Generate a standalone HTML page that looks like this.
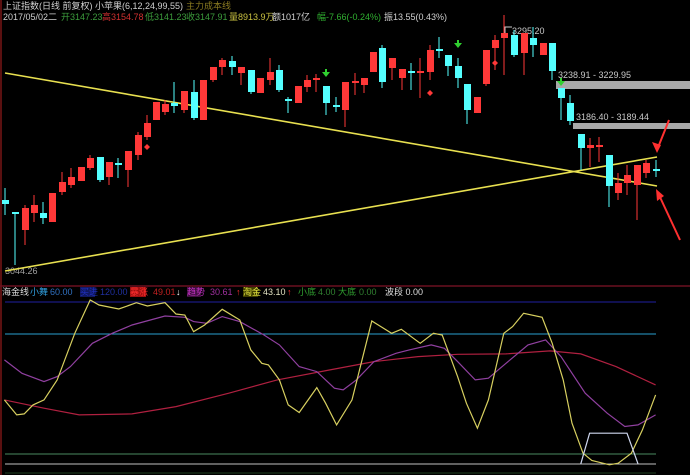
<!DOCTYPE html>
<html><head><meta charset="utf-8"><style>
html,body{margin:0;padding:0;background:#000;width:690px;height:475px;overflow:hidden}
svg{display:block}
text{font-family:"Liberation Sans","Noto Sans CJK SC",sans-serif;font-size:9px}
</style></head><body>
<svg id="s" width="690" height="475" viewBox="0 0 690 475" xmlns="http://www.w3.org/2000/svg">
<rect width="690" height="475" fill="#000"/>
<rect x="0" y="0" width="2" height="475" fill="#5a1010"/>
<line x1="0" y1="286" x2="690" y2="286" stroke="#6a1020" stroke-width="1.5"/>
<text x="3" y="9" fill="#d0d0d0">上证指数(日线 前复权) 小苹果(6,12,24,99,55)</text>
<text x="186" y="9" fill="#8a7a20">主力成本线</text>
<text x="3" y="20" fill="#d0d0d0">2017/05/02二</text>
<text x="61" y="20" fill="#3c9c3c">开3147.23</text>
<text x="102" y="20" fill="#d03030">高3154.78</text>
<text x="145" y="20" fill="#3c9c3c">低3141.23</text>
<text x="186" y="20" fill="#3c9c3c">收3147.91</text>
<text x="229" y="20" fill="#c8c040">量8913.9万</text>
<text x="272" y="20" fill="#d0d0d0">额1017亿</text>
<text x="317" y="20" fill="#30b030">幅-7.66(-0.24%)</text>
<text x="384" y="20" fill="#d0d0d0">振13.55(0.43%)</text>
<rect x="556" y="81" width="134" height="8" fill="#a8a8a8"/>
<rect x="573" y="123" width="117" height="6" fill="#a8a8a8"/>
<text x="558" y="78" fill="#c8c8c8">3238.91 - 3229.95</text>
<text x="576" y="120" fill="#c8c8c8">3186.40 - 3189.44</text>
<path d="M505 33 V27 H512" stroke="#ccc" fill="none"/>
<text x="512" y="34" fill="#c8c8c8">3295.20</text>
<text x="5" y="274" fill="#a0a0a0">3044.26</text>
<line x1="5" y1="73" x2="657" y2="186" stroke="#e8e050" stroke-width="1.6"/>
<line x1="5" y1="271" x2="657" y2="157" stroke="#e8e050" stroke-width="1.6"/>
<g id="c"></g>
<path d="M669 120 L657 150" stroke="#ff3030" stroke-width="2"/>
<path d="M657 153 L652 142 L661 145 Z" fill="#ff3030"/>
<path d="M680 240 L659 195" stroke="#ff3030" stroke-width="2"/>
<path d="M656 189 L657 201 L664 196 Z" fill="#ff3030"/>
<g style="font-size:8.5px">
<text x="2" y="295" fill="#ddd">海金线</text>
<text x="30" y="295" fill="#30a0e0">小舞</text>
<text x="50" y="295" fill="#3070c0">60.00</text>
<rect x="80" y="287" width="15" height="10" fill="#101860"/>
<text x="80" y="295" fill="#2030c0">买进</text>
<text x="100" y="295" fill="#2030a0">120.00</text>
<rect x="130" y="287" width="16" height="10" fill="#a01010"/>
<text x="130" y="295" fill="#ff3030">暴涨</text>
<text x="153" y="295" fill="#c02020">49.01</text>
<text x="176" y="295" fill="#fff">↓</text>
<rect x="187" y="287" width="14" height="10" fill="#401040"/>
<text x="187" y="295" fill="#c030c0">趋势</text>
<text x="210" y="295" fill="#a030a0">30.61</text>
<text x="236" y="295" fill="#ff3030">↑</text>
<rect x="243" y="287" width="15" height="10" fill="#404000"/>
<text x="243" y="295" fill="#e0e040">淘金</text>
<text x="263" y="295" fill="#e0e0c0">43.10</text>
<text x="287" y="295" fill="#ff3030">↑</text>
<text x="298" y="295" fill="#30a030">小底</text>
<text x="318" y="295" fill="#308030">4.00</text>
<text x="338" y="295" fill="#30a030">大底</text>
<text x="359" y="295" fill="#308030">0.00</text>
<text x="385" y="295" fill="#ddd">波段 0.00</text>
</g>
<line x1="5" y1="302" x2="656" y2="302" stroke="#2020a0" stroke-width="1"/>
<line x1="5" y1="334" x2="656" y2="334" stroke="#2aa0d0" stroke-width="1"/>
<line x1="5" y1="454" x2="656" y2="454" stroke="#4a8a60" stroke-width="1"/>
<line x1="5" y1="464" x2="656" y2="464" stroke="#c0c0c0" stroke-width="1"/>
<line x1="5" y1="473" x2="656" y2="473" stroke="#204020" stroke-width="1"/>
<polyline id="red" fill="none" stroke="#b02040" stroke-width="1.2"/>
<polyline id="pur" fill="none" stroke="#9040a0" stroke-width="1.2"/>
<polyline id="yel" fill="none" stroke="#d8d060" stroke-width="1.2"/>
<polyline id="wht" fill="none" stroke="#d0d8f0" stroke-width="1.2"/>
</svg>
<script>
var C=[[5,200,204,188,215,'c'],[15,212,214,212,265,'c'],[25,208,230,205,245,'r'],[34,205,213,195,222,'r'],[43,213,218,202,224,'c'],[52,193,222,193,222,'r'],[62,182,192,172,195,'r'],[71,177,185,168,188,'r'],[81,167,181,167,181,'r'],[90,158,168,155,170,'r'],[100,157,180,157,182,'c'],[109,162,177,162,185,'r'],[118,163,165,158,178,'c'],[128,151,170,151,187,'r'],[138,135,155,132,160,'r'],[147,123,137,115,140,'r'],[156,102,120,102,120,'r'],[165,104,112,100,115,'r'],[174,103,106,82,113,'c'],[184,91,110,91,113,'r'],[194,92,118,80,120,'c'],[203,80,120,80,120,'r'],[213,67,80,67,82,'r'],[222,60,67,58,75,'r'],[232,61,67,56,75,'c'],[241,67,73,67,85,'r'],[251,70,92,70,94,'c'],[260,78,93,78,93,'r'],[270,72,80,58,85,'r'],[279,70,90,65,92,'c'],[288,99,101,97,113,'c'],[298,86,103,86,103,'r'],[307,80,87,75,92,'r'],[316,78,80,74,92,'r'],[326,86,103,86,115,'c'],[336,105,107,97,112,'c'],[345,82,110,82,127,'r'],[355,81,83,73,95,'r'],[364,78,85,78,93,'r'],[373,52,72,52,72,'r'],[382,48,82,45,88,'c'],[392,58,68,58,80,'r'],[402,69,78,69,90,'r'],[411,71,73,63,90,'c'],[420,71,73,58,98,'r'],[430,50,72,45,80,'r'],[439,49,51,37,58,'c'],[448,55,66,55,76,'c'],[458,66,78,58,88,'c'],[467,84,110,84,124,'c'],[477,97,113,97,113,'r'],[486,50,84,50,86,'r'],[495,40,48,35,70,'r'],[504,33,38,15,75,'r'],[514,35,55,30,57,'c'],[524,33,53,33,75,'r'],[533,38,45,27,57,'c'],[543,43,55,43,55,'r'],[552,43,71,43,80,'c'],[561,88,98,88,120,'c'],[570,103,121,95,125,'c'],[581,134,148,134,170,'c'],[590,145,148,138,167,'r'],[599,145,147,137,162,'r'],[609,155,186,155,207,'c'],[618,183,193,173,200,'r'],[627,175,183,165,195,'r'],[637,165,185,165,220,'r'],[646,163,173,160,178,'r'],[656,169,171,160,177,'c']];
var g=document.getElementById('c'),h='';
C.forEach(function(a){var col=a[5]=='r'?'#ff3838':'#54ffff';
h+='<line x1="'+a[0]+'" y1="'+a[3]+'" x2="'+a[0]+'" y2="'+a[4]+'" stroke="'+col+'" stroke-width="1"/>';
var t=a[1],b=a[2];if(b-t<2){t-=1;b=t+2;}
h+='<rect x="'+(a[0]-3)+'" y="'+t+'" width="7" height="'+(b-t)+'" fill="'+col+'"/>';});
[[147,147],[495,63],[430,93]].forEach(function(p){h+='<path d="M'+p[0]+' '+(p[1]-3)+' l3 3 l-3 3 l-3 -3 z" fill="#ff3838"/>';});
[[326,75],[458,46],[561,84]].forEach(function(p){h+='<path d="M'+(p[0]-4)+' '+(p[1]-3)+' h8 l-4 5 z M'+(p[0]-1)+' '+(p[1]-6)+' h2 v4 h-2z" fill="#30d030"/>';});
g.innerHTML=h;
function P(id,a){var s='';for(var i=0;i<a.length;i+=2){s+=(a[i]*0.44).toFixed(1)+','+(290+a[i+1]*0.333).toFixed(1)+' ';}document.getElementById(id).setAttribute('points',s);}
P('yel',[10,330,38,375,55,372,75,345,100,330,130,270,170,130,205,30,225,45,270,57,310,38,335,48,375,38,400,72,420,75,440,125,465,105,505,58,545,90,570,180,595,220,610,225,635,270,655,345,680,368,720,293,740,340,765,405,800,330,845,93,890,130,912,118,955,160,985,130,1005,135,1040,260,1060,340,1085,415,1110,330,1145,130,1165,110,1190,70,1232,82,1255,160,1280,270,1300,400,1325,490,1345,512,1385,525,1405,520,1435,490,1460,420,1490,315]);
P('pur',[10,210,50,250,100,275,130,260,160,230,210,160,255,130,300,105,375,78,420,82,440,95,470,100,505,80,545,95,600,135,635,165,680,230,720,245,760,295,780,300,810,270,850,215,900,190,930,180,980,165,1010,175,1040,215,1080,270,1110,265,1150,220,1200,165,1240,150,1275,200,1330,310,1380,370,1420,410,1450,405,1490,375]);
P('red',[10,330,100,355,180,375,300,372,400,350,520,310,630,270,750,240,850,215,950,200,1040,193,1150,192,1250,183,1320,192,1400,230,1490,285]);
P('wht',[1320,522,1340,430,1425,430,1450,522]);
</script>
</body></html>
